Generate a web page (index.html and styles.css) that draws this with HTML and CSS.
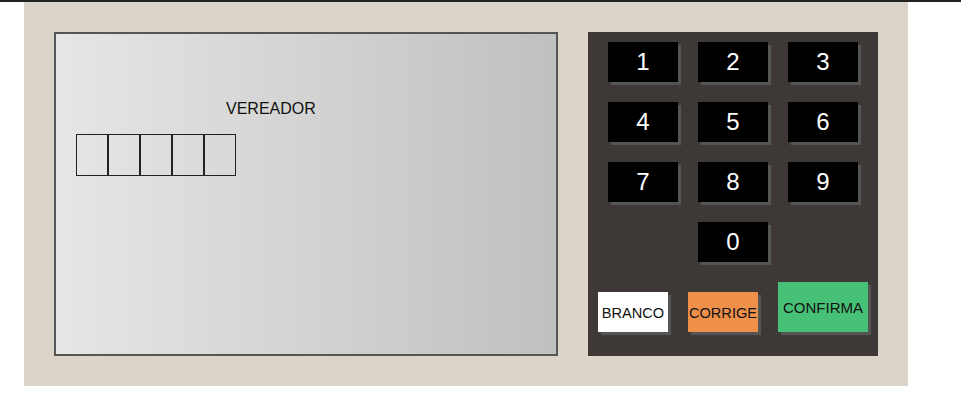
FILE: index.html
```html
<!DOCTYPE html>
<html lang="pt-BR">
<head>
<meta charset="utf-8">
<title>Urna</title>
<link rel="stylesheet" href="styles.css">
</head>
<body>
<div class="topline"></div>
<div class="urna">
  <div class="tela">
    <div class="cargo">VEREADOR</div>
    <div class="numeros">
      <div class="digito"></div>
      <div class="digito"></div>
      <div class="digito"></div>
      <div class="digito"></div>
      <div class="digito"></div>
    </div>
  </div>
  <div class="teclado">
    <div class="teclas">
      <div class="tecla">1</div>
      <div class="tecla">2</div>
      <div class="tecla">3</div>
      <div class="tecla">4</div>
      <div class="tecla">5</div>
      <div class="tecla">6</div>
      <div class="tecla">7</div>
      <div class="tecla">8</div>
      <div class="tecla">9</div>
      <div class="tecla zero">0</div>
    </div>
    <div class="acoes">
      <div class="botao branco">BRANCO</div>
      <div class="botao corrige">CORRIGE</div>
      <div class="botao confirma">CONFIRMA</div>
    </div>
  </div>
</div>
</body>
</html>
```
FILE: styles.css
```css
html, body {
  margin: 0;
  padding: 0;
  background: #ffffff;
  font-family: "Liberation Sans", Arial, sans-serif;
}

.topline {
  height: 2px;
  background: #222222;
}

.urna {
  margin-left: 24px;
  width: 884px;
  box-sizing: border-box;
  padding: 30px;
  background: #dbd4c9;
  display: flex;
  gap: 30px;
}

.tela {
  width: 504px;
  height: 324px;
  box-sizing: border-box;
  border: 2px solid #555555;
  background: linear-gradient(to right, #e6e6e6, #c0c0c0);
  padding: 20px;
}

.cargo {
  margin: 46px 0 16px 150px;
  font-size: 16px;
  line-height: 18px;
  color: #111111;
}

.numeros {
  display: flex;
}

.digito {
  width: 30px;
  height: 40px;
  border: 1px solid #222222;
}

.teclado {
  width: 290px;
  height: 324px;
  box-sizing: border-box;
  background: #3e3837;
  padding-top: 10px;
  display: flex;
  flex-direction: column;
  align-items: center;
  gap: 20px;
}

.teclas {
  display: grid;
  grid-template-columns: repeat(3, 70px);
  gap: 20px;
}

.tecla {
  height: 40px;
  background: #000000;
  color: #ffffff;
  font-size: 24px;
  display: flex;
  align-items: center;
  justify-content: center;
  box-shadow: 3px 3px 0 #545655;
}

.zero {
  grid-column: 2;
}

.acoes {
  display: flex;
  align-items: flex-end;
  gap: 20px;
}

.botao {
  width: 70px;
  height: 40px;
  display: flex;
  align-items: center;
  justify-content: center;
  font-size: 14.6px;
  color: #111111;
  box-shadow: 3px 3px 0 #545655;
  white-space: nowrap;
}

.branco {
  background: #ffffff;
  padding-top: 2px;
  box-sizing: border-box;
}

.corrige {
  background: #ef904a;
  padding-top: 2px;
  box-sizing: border-box;
}

.confirma {
  width: 90px;
  height: 50px;
  background: #48c178;
  font-size: 15px;
}
```
